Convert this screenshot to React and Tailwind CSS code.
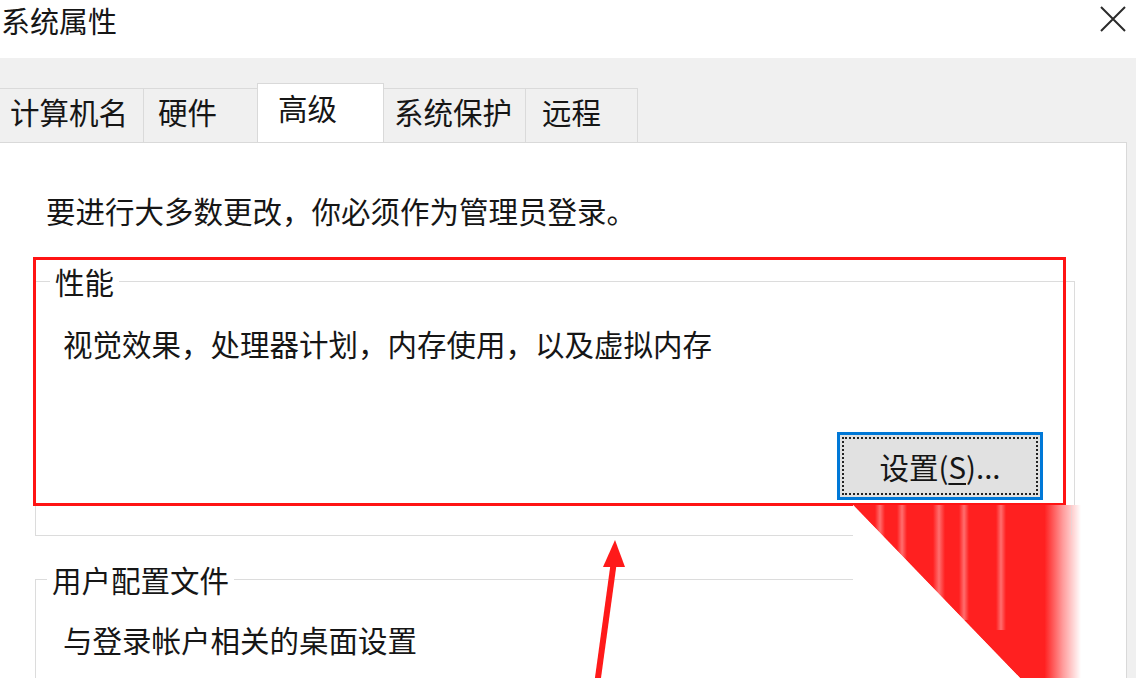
import React from "react";

const tabs = [
  { label: "计算机名", w: "w-[144px]", pl: "pl-[10px]" },
  { label: "硬件", w: "w-[115px]", pl: "pl-[14px]" },
  { label: "高级", w: "w-[127px]", pl: "pl-[20px]", active: true },
  { label: "系统保护", w: "w-[142px]", pl: "pl-[10px]" },
  { label: "远程", w: "w-[113px]", pl: "pl-[16px]" },
];

const font = { fontFamily: '"Noto Sans CJK SC", "Noto Sans", sans-serif' };

const App = () => {
  return (
    <div
      className="relative w-[1136px] h-[678px] overflow-hidden bg-[#f0f0f0] text-[#161616] text-[29.5px] leading-[40px]"
      style={font}
    >
      {/* Title bar */}
      <div className="h-[58px] bg-white flex items-start justify-between">
        <p className="ml-[1px] text-[29px]">系统属性</p>
        <svg width="26" height="26" viewBox="0 0 26 26" className="mt-[6px] mr-[10px]">
          <path d="M1 1 L25 25 M25 1 L1 25" stroke="#2b2b2b" strokeWidth="2" fill="none" />
        </svg>
      </div>

      {/* Tabs */}
      <div className="flex items-end pt-[25px] ml-[-1px]">
        {tabs.map((t) =>
          t.active ? (
            <div
              key={t.label}
              className={`${t.w} ${t.pl} h-[59px] bg-white border border-b-0 border-[#d9d9d9] mx-[-1px] relative z-10 pt-[3px]`}
            >
              {t.label}
            </div>
          ) : (
            <div
              key={t.label}
              className={`${t.w} ${t.pl} h-[54px] border border-b-0 border-[#dadada] border-r-0 last:border-r pt-[2px]`}
            >
              {t.label}
            </div>
          )
        )}
      </div>

      {/* Panel */}
      <div className="w-[1128px] ml-[-1px] h-[600px] bg-white border-t border-r border-[#d9d9d9] pt-[47px] pl-[47px] pr-[51px]">
        <p>要进行大多数更改，你必须作为管理员登录。</p>

        <fieldset className="mt-[31px] ml-[-11px] border border-[#dcdcdc] pr-[31px] pb-[35px]">
          <legend className="ml-[14px] px-[5px]">性能</legend>
          <p className="mt-[22px] pl-[27px]">视觉效果，处理器计划，内存使用，以及虚拟内存</p>
          <div className="flex justify-end mt-[69px]">
            <button className="w-[206px] h-[68px] bg-[#e1e1e1] border-[3px] border-[#0078d7] p-[2px]">
              <span className="flex h-full w-full items-center justify-center border-2 border-dotted border-[#222]">
                设置(<span className="underline underline-offset-4">S</span>)...
              </span>
            </button>
          </div>
        </fieldset>

        <fieldset className="mt-[23px] ml-[-11px] border border-[#dcdcdc] pb-[60px]">
          <legend className="ml-[11px] px-[5px]">用户配置文件</legend>
          <p className="mt-[20px] pl-[27px]">与登录帐户相关的桌面设置</p>
        </fieldset>
      </div>

      {/* Annotation: red highlight box */}
      <div className="absolute left-[33px] top-[257px] w-[1033px] h-[249px] border-[3px] border-[#ff1414]" />

      {/* Watermark smear + red wedge */}
      <svg className="absolute left-[853px] top-[505px]" width="283" height="173" viewBox="0 0 283 173">
        <defs>
          <linearGradient id="fade" x1="0" x2="1" y1="0" y2="0">
            <stop offset="0" stopColor="#ff2020" />
            <stop offset="0.84" stopColor="#ff2020" />
            <stop offset="0.92" stopColor="#ff2020" stopOpacity="0.45" />
            <stop offset="1" stopColor="#ff2020" stopOpacity="0" />
          </linearGradient>
          <linearGradient id="streak" x1="0" x2="1" y1="0" y2="0">
            <stop offset="0" stopColor="#fff" stopOpacity="0" />
            <stop offset="0.5" stopColor="#fff" stopOpacity="0.35" />
            <stop offset="1" stopColor="#fff" stopOpacity="0" />
          </linearGradient>
        </defs>
        <rect x="0" y="0" width="270" height="173" fill="#ffffff" />
        <polygon points="0,0 228,0 228,173 167,173" fill="url(#fade)" />
        <rect x="22" y="0" width="10" height="70" fill="url(#streak)" />
        <rect x="44" y="0" width="10" height="85" fill="url(#streak)" />
        <rect x="80" y="0" width="12" height="105" fill="url(#streak)" />
        <rect x="106" y="0" width="10" height="115" fill="url(#streak)" />
        <rect x="143" y="0" width="10" height="125" fill="url(#streak)" />
        <polygon points="0,0 167,173 0,173" fill="#ffffff" />
        <rect x="218" y="0" width="1" height="30" fill="#dcdcdc" opacity="0.5" />
      </svg>

      {/* Red arrow */}
      <svg className="absolute left-[585px] top-[535px]" width="50" height="143" viewBox="0 0 50 143">
        <line x1="12" y1="150" x2="29" y2="26" stroke="#ff1a1a" strokeWidth="6" />
        <polygon points="30,5 18,32 40,32" fill="#ff1a1a" />
      </svg>
    </div>
  );
};

export default App;
